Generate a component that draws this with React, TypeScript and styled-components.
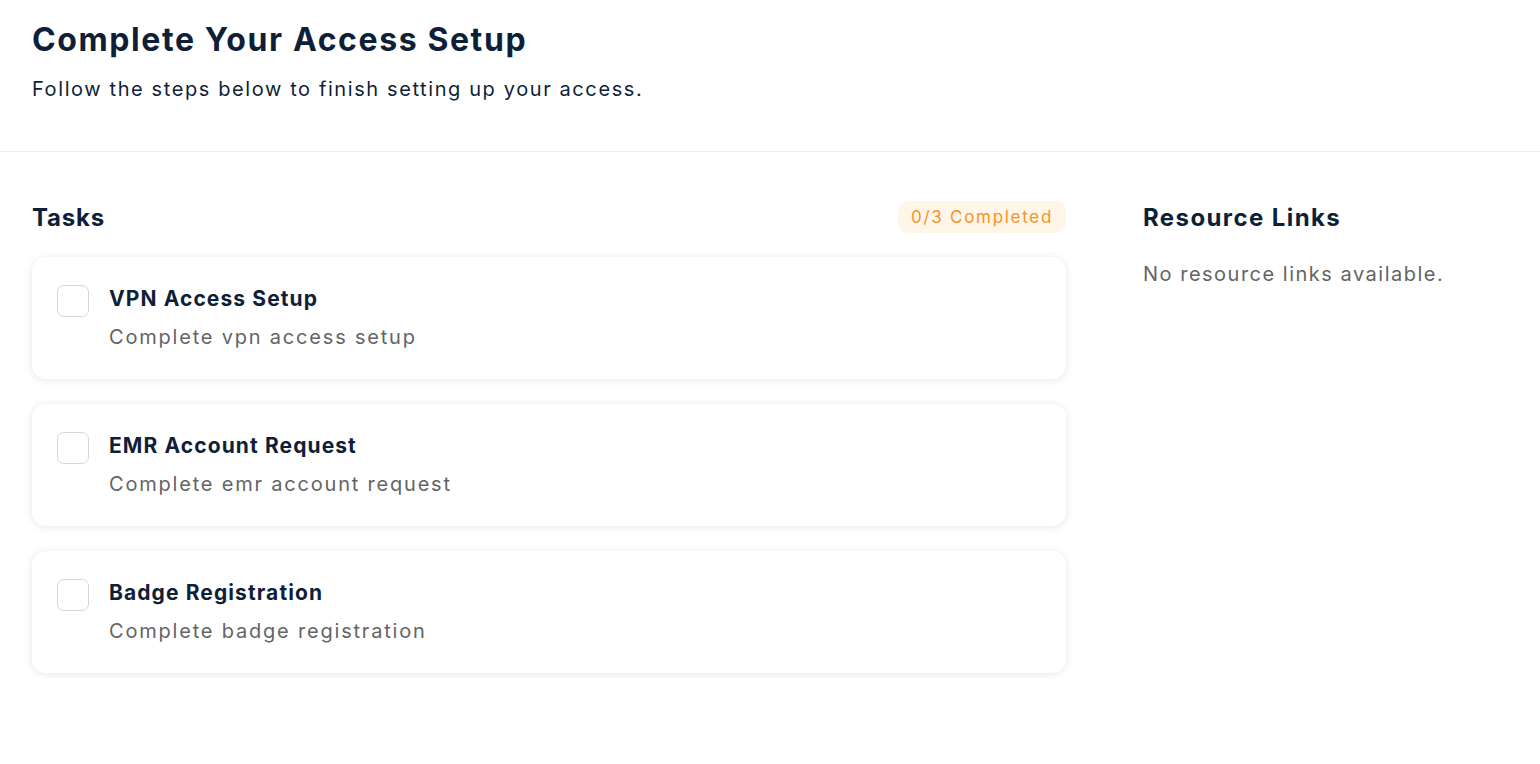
import React from 'react';
import styled, { createGlobalStyle } from 'styled-components';

const GlobalStyle = createGlobalStyle`
  * {
    box-sizing: border-box;
  }

  body {
    margin: 0;
    background: #ffffff;
    font-family: Inter, 'Open Sans', sans-serif;
    color: #0f1f38;
  }
`;

const tasks = [
  { id: 'vpn', title: 'VPN Access Setup', description: 'Complete vpn access setup' },
  { id: 'emr', title: 'EMR Account Request', description: 'Complete emr account request' },
  { id: 'badge', title: 'Badge Registration', description: 'Complete badge registration' },
];

const App = () => {
  const done = 0;

  return (
    <>
      <GlobalStyle />
      <Page>
        <Header>
          <Title>Complete Your Access Setup</Title>
          <Subtitle>Follow the steps below to finish setting up your access.</Subtitle>
        </Header>
        <Content>
          <TasksColumn>
            <SectionHead>
              <SectionTitle>Tasks</SectionTitle>
              <Badge>
                {done}/{tasks.length} Completed
              </Badge>
            </SectionHead>
            <TaskList>
              {tasks.map((task) => (
                <TaskCard key={task.id}>
                  <Checkbox type='checkbox' aria-label={task.title} />
                  <TaskText>
                    <TaskTitle>{task.title}</TaskTitle>
                    <TaskDescription>{task.description}</TaskDescription>
                  </TaskText>
                </TaskCard>
              ))}
            </TaskList>
          </TasksColumn>
          <Aside>
            <SectionHead>
              <SectionTitle $wide>Resource Links</SectionTitle>
            </SectionHead>
            <EmptyText>No resource links available.</EmptyText>
          </Aside>
        </Content>
      </Page>
    </>
  );
};

export default App;

const Page = styled.div`
  min-height: 100vh;
  background: #ffffff;
`;

const Header = styled.header`
  padding: 18px 32px 49px;
  border-bottom: 1px solid #ececec;
`;

const Title = styled.h1`
  margin: 0;
  font-size: 32px;
  line-height: 44px;
  font-weight: 700;
  letter-spacing: 1.6px;
  color: #0f1f38;
`;

const Subtitle = styled.p`
  margin: 14px 0 0;
  font-size: 20px;
  line-height: 26px;
  font-weight: 400;
  letter-spacing: 1.6px;
  color: #0f1f38;
`;

const Content = styled.main`
  display: grid;
  grid-template-columns: 1034px 1fr;
  gap: 77px;
  padding: 49px 32px 32px;
`;

const TasksColumn = styled.section`
  display: flex;
  flex-direction: column;
`;

const Aside = styled.aside`
  display: flex;
  flex-direction: column;
`;

const SectionHead = styled.div`
  display: flex;
  align-items: center;
  justify-content: space-between;
  height: 32px;
`;

const SectionTitle = styled.h2<{ $wide?: boolean }>`
  margin: 0;
  font-size: 24px;
  font-weight: 700;
  letter-spacing: ${(p) => (p.$wide ? '1.4px' : '0.8px')};
  color: #0f1f38;
`;

const Badge = styled.span`
  padding: 5px 13px;
  border-radius: 10px;
  background: #fff6e9;
  color: #f7931e;
  font-size: 17px;
  line-height: 22px;
  letter-spacing: 1.7px;
`;

const TaskList = styled.div`
  display: flex;
  flex-direction: column;
  gap: 25px;
  margin-top: 24px;
`;

const TaskCard = styled.div`
  display: flex;
  align-items: flex-start;
  gap: 20px;
  height: 122px;
  padding: 28px 25px;
  background: #ffffff;
  border-radius: 14px;
  box-shadow: 0 1px 8px rgba(0, 0, 0, 0.1);
`;

const Checkbox = styled.input`
  appearance: none;
  flex: none;
  width: 32px;
  height: 32px;
  margin: 0;
  border: 1px solid #d6d6d6;
  border-radius: 7px;
  background: #ffffff;
  cursor: pointer;
`;

const TaskText = styled.div`
  display: flex;
  flex-direction: column;
  gap: 10px;
`;

const TaskTitle = styled.div`
  font-size: 21px;
  line-height: 28px;
  font-weight: 700;
  letter-spacing: 1.1px;
  color: #0f1f38;
`;

const TaskDescription = styled.div`
  font-size: 20px;
  line-height: 28px;
  letter-spacing: 1.8px;
  color: #646464;
`;

const EmptyText = styled.p`
  margin: 27px 0 0;
  font-size: 20px;
  line-height: 28px;
  letter-spacing: 1.5px;
  color: #646464;
`;
